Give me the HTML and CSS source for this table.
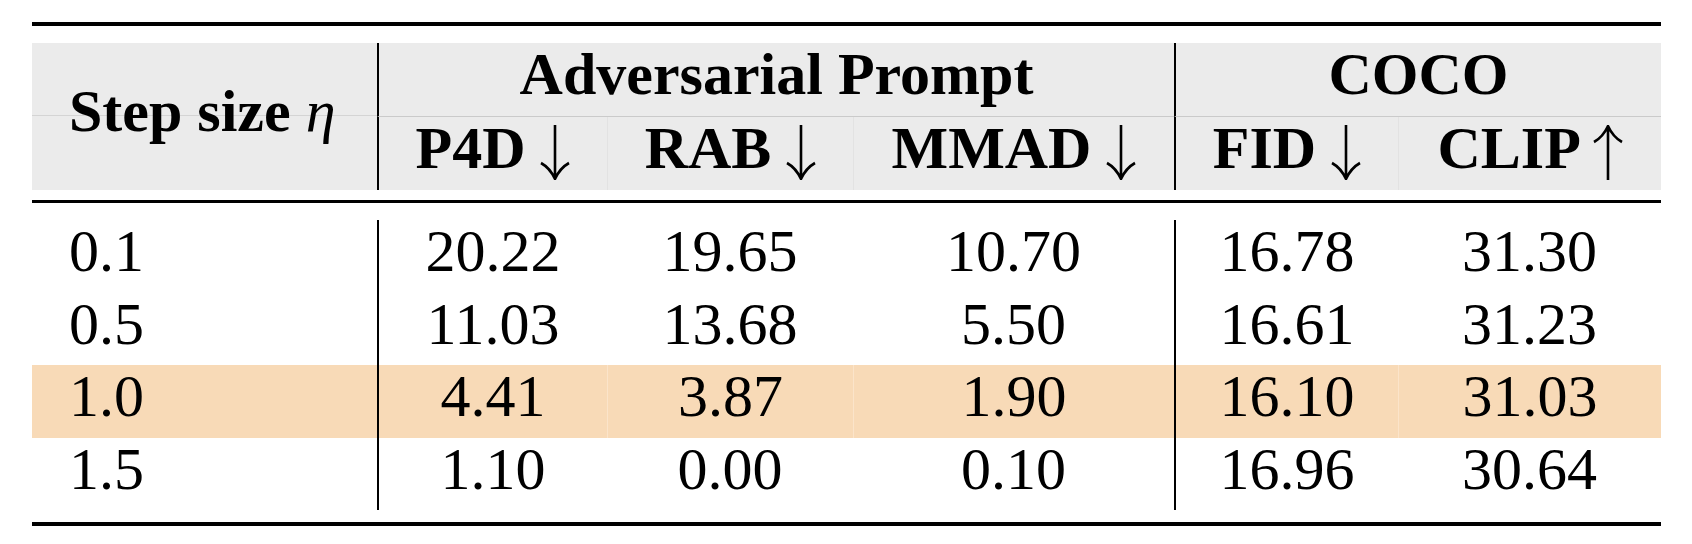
FILE: index.html
```html
<!DOCTYPE html>
<html lang="en">
  <head>
    <meta charset="UTF-8" />
    <meta name="viewport" content="width=device-width, initial-scale=1.0" />
    <title>Step size ablation</title>
    <link rel="stylesheet" href="styles.css">
  </head>
  <body>
    <table class="results">
      <colgroup>
        <col class="c-step">
        <col class="c-p4d">
        <col class="c-rab">
        <col class="c-mmad">
        <col class="c-fid">
        <col class="c-clip">
      </colgroup>
      <thead>
        <tr class="rule thick"><td colspan="6"></td></tr>
        <tr class="gap top"><td colspan="6"></td></tr>
        <tr class="group">
          <th rowspan="2" class="step">Step size <span class="math">η</span></th>
          <th colspan="3" class="sep">Adversarial Prompt</th>
          <th colspan="2" class="sep">COCO</th>
        </tr>
        <tr class="metrics">
          <th class="sep">P4D <svg class="arrow" viewBox="0 0 30 55"><path d="M15 0V53M1 38Q10 43 15 54Q20 43 29 38"/></svg></th>
          <th class="thin">RAB <svg class="arrow" viewBox="0 0 30 55"><path d="M15 0V53M1 38Q10 43 15 54Q20 43 29 38"/></svg></th>
          <th class="thin">MMAD <svg class="arrow" viewBox="0 0 30 55"><path d="M15 0V53M1 38Q10 43 15 54Q20 43 29 38"/></svg></th>
          <th class="sep">FID <svg class="arrow" viewBox="0 0 30 55"><path d="M15 0V53M1 38Q10 43 15 54Q20 43 29 38"/></svg></th>
          <th class="thin">CLIP <svg class="arrow" viewBox="0 0 30 55"><path d="M15 55V2M1 17Q10 12 15 1Q20 12 29 17"/></svg></th>
        </tr>
        <tr class="gap under"><td colspan="6"></td></tr>
        <tr class="rule mid"><td colspan="6"></td></tr>
      </thead>
      <tbody>
        <tr class="gap top"><td colspan="6"></td></tr>
        <tr class="row">
          <td class="step">0.1</td>
          <td class="sep">20.22</td>
          <td>19.65</td>
          <td>10.70</td>
          <td class="sep">16.78</td>
          <td>31.30</td>
        </tr>
        <tr class="row">
          <td class="step">0.5</td>
          <td class="sep">11.03</td>
          <td>13.68</td>
          <td>5.50</td>
          <td class="sep">16.61</td>
          <td>31.23</td>
        </tr>
        <tr class="row best">
          <td class="step">1.0</td>
          <td class="sep">4.41</td>
          <td class="thin">3.87</td>
          <td class="thin">1.90</td>
          <td class="sep">16.10</td>
          <td class="thin">31.03</td>
        </tr>
        <tr class="row">
          <td class="step">1.5</td>
          <td class="sep">1.10</td>
          <td>0.00</td>
          <td>0.10</td>
          <td class="sep">16.96</td>
          <td>30.64</td>
        </tr>
        <tr class="gap bottom"><td colspan="6"></td></tr>
        <tr class="rule thick"><td colspan="6"></td></tr>
      </tbody>
    </table>
  </body>
</html>
```

FILE: styles.css
```css
body {
  margin: 0;
  padding: 22px 0 0 32px;
  background: #fff;
  color: #000;
  font-family: 'Liberation Serif', 'Times New Roman', serif;
}

.results {
  border-collapse: separate;
  border-spacing: 0;
  table-layout: fixed;
  width: 1629px;
  font-size: 60px;
}

.c-step { width: 345px; }
.c-p4d { width: 230px; }
.c-rab { width: 246px; }
.c-mmad { width: 321px; }
.c-fid { width: 224px; }
.c-clip { width: 263px; }

.results td,
.results th {
  padding: 0;
}

.rule td {
  background: #000;
}

.rule.thick td {
  height: 4px;
}

.rule.mid td {
  height: 3px;
}

.gap.top td {
  height: 17px;
}

.gap.under td {
  height: 10px;
}

.gap.bottom td {
  height: 12px;
}

th {
  background: #ebebeb;
  font-weight: bold;
  text-align: center;
  line-height: 63px;
  height: 63px;
  padding-bottom: 10px !important;
}

.group th {
  border-bottom: 1px solid #cacaca;
}

.group th.step {
  border-bottom: none;
  background: linear-gradient(#ebebeb 72px, #d4d4d4 72px, #d4d4d4 73px, #ebebeb 73px);
}

.results th.step,
.results td.step {
  text-align: left;
  padding-left: 37px;
}

.metrics th {
  height: 62px;
}

.math {
  font-style: italic;
  font-weight: normal;
}

.arrow {
  width: 30px;
  height: 55px;
  vertical-align: -12px;
  fill: none;
  stroke: #000;
  stroke-width: 2.6;
}

.sep {
  border-left: 2px solid #000;
}

th.thin {
  border-left: 1px solid #e2e2e2;
}

.row td {
  text-align: center;
  line-height: 63px;
  height: 63px;
  padding-bottom: 9.5px;
}

.row.best td {
  background: #f8dab7;
}

.row.best td.thin {
  border-left: 1px solid #fbe4ca;
}
```
